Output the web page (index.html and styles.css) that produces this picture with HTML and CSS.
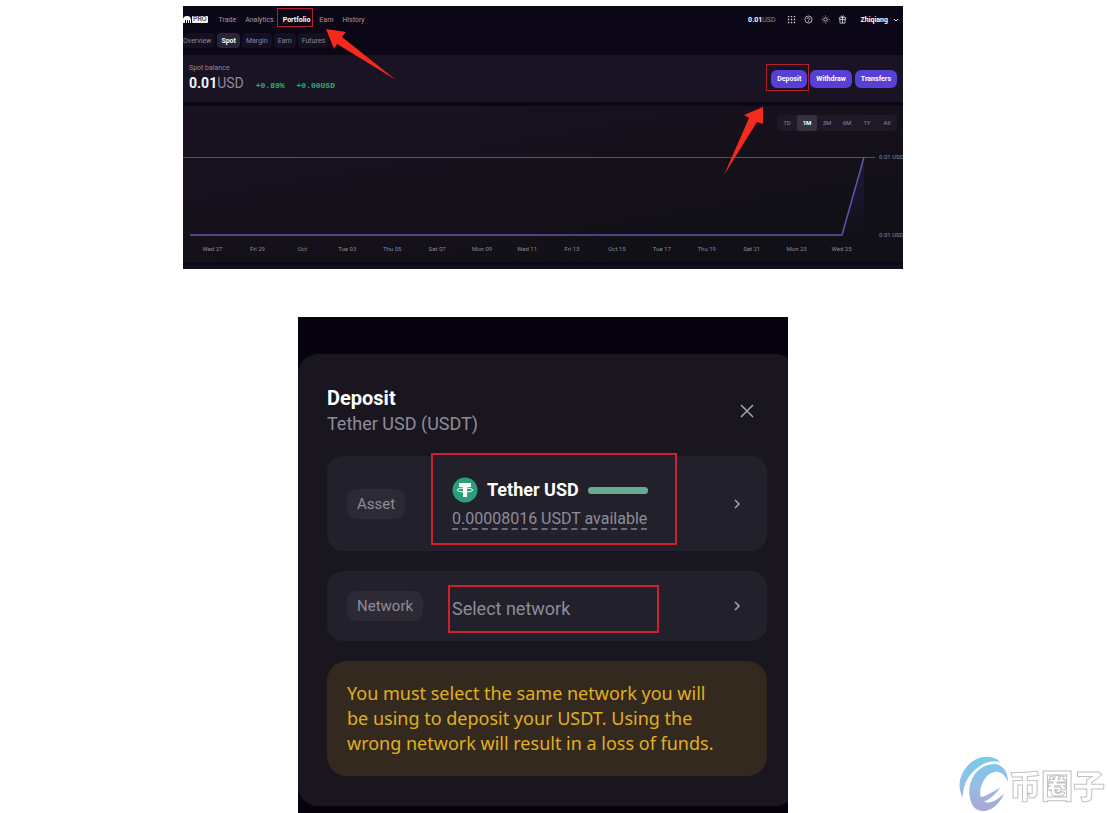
FILE: index.html
```html
<!DOCTYPE html>
<html lang="en">
  <head>
    <meta charset="UTF-8" />
    <meta name="viewport" content="width=device-width, initial-scale=1.0" />
    <title>Deposit</title>
    <link rel="stylesheet" href="styles.css">
  </head>
  <body>
    <main class="article">
      <section class="portfolio">
        <header class="topbar">
          <svg class="logo" viewBox="0 0 9 8" aria-hidden="true">
            <path d="M0 7V4a4 4 0 0 1 8 0v3H7V4.500a.5.5 0 0 0-1 0V7H5V4.500a.5.5 0 0 0-1 0V7H3V4.500a.5.5 0 0 0-1 0V7z" fill="#fff" />
          </svg>
          <span class="pro">PRO</span>
          <nav class="main-nav">
            <a href="#">Trade</a>
            <a href="#">Analytics</a>
            <a href="#" class="active marked">Portfolio</a>
            <a href="#">Earn</a>
            <a href="#">History</a>
          </nav>
          <div class="account">
            <span class="total"><b>0.01</b>USD</span>
            <svg viewBox="0 0 10 10" fill="#d5d2dc" aria-hidden="true">
              <path d="M1 1h1.500v1.500H1zM4.300 1h1.500v1.500H4.300zM7.600 1h1.500v1.500H7.600zM1 4.300h1.500v1.500H1zM4.300 4.300h1.500v1.500H4.300zM7.600 4.300h1.500v1.500H7.600zM1 7.600h1.500v1.500H1zM4.300 7.600h1.500v1.500H4.300zM7.600 7.600h1.500v1.500H7.600z" />
            </svg>
            <svg viewBox="0 0 10 10" fill="none" stroke="#d5d2dc" stroke-width=".9" aria-hidden="true">
              <circle cx="5" cy="5" r="3.900" />
              <path d="M3.800 4.200a1.200 1.200 0 1 1 1.900 1c-.5.300-.7.500-.7 1M5 7v.8" />
            </svg>
            <svg viewBox="0 0 10 10" fill="none" stroke="#d5d2dc" stroke-width=".9" aria-hidden="true">
              <circle cx="5" cy="5" r="1.900" />
              <path d="M5 .6v1M5 8.400v1M.6 5h1M8.400 5h1M1.900 1.900l.7.7M7.400 7.400l.7.700M1.900 8.100l.7-.7M7.400 2.600l.7-.7" />
            </svg>
            <svg viewBox="0 0 10 10" fill="none" stroke="#d5d2dc" stroke-width=".9" aria-hidden="true">
              <path d="M1.500 3h7v2h-7zM2.200 5v4h5.600V5M5 3v6M5 3C3 3 2.800 1 4 1c.8 0 1 1 1 2 0-1 .2-2 1-2 1.200 0 1 2-1 2" />
            </svg>
            <button class="user" type="button">
              Zhiqiang
              <svg viewBox="0 0 6 6" fill="none" stroke="#d5d2dc" aria-hidden="true"><path d="M1 2l2 2 2-2" /></svg>
            </button>
          </div>
        </header>

        <nav class="tabs">
          <a href="#">Overview</a>
          <a href="#" class="active">Spot</a>
          <a href="#">Margin</a>
          <a href="#">Earn</a>
          <a href="#">Futures</a>
        </nav>

        <div class="balance">
          <div>
            <div class="balance-label">Spot balance</div>
            <div class="balance-row">
              <span class="amount"><b>0.01</b>USD</span>
              <span class="change">+0.89%</span>
              <span class="change">+0.00USD</span>
            </div>
          </div>
          <div class="actions">
            <span class="marked"><button type="button">Deposit</button></span>
            <button type="button">Withdraw</button>
            <button type="button">Transfers</button>
          </div>
        </div>

        <div class="chart">
          <div class="ranges">
            <button type="button">7D</button>
            <button type="button" class="active">1M</button>
            <button type="button">3M</button>
            <button type="button">6M</button>
            <button type="button">1Y</button>
            <button type="button">All</button>
          </div>
          <div class="plot">
            <svg viewBox="0 0 692 90" preserveAspectRatio="none" aria-hidden="true">
              <defs>
                <linearGradient id="area" x1="0" y1="0" x2="0" y2="1">
                  <stop offset="0" stop-color="#5741d9" stop-opacity=".2" />
                  <stop offset="1" stop-color="#5741d9" stop-opacity="0" />
                </linearGradient>
              </defs>
              <path d="M659 85L681 7V85z" fill="url(#area)" />
              <path d="M0 7.500H692" stroke="#56525c" />
              <path d="M7 85H659L681 7" fill="none" stroke="#6553ae" stroke-width="1.500" />
            </svg>
            <div class="y-axis">
              <span>0.01 USD</span>
              <span>0.01 USD</span>
            </div>
          </div>
          <div class="x-axis">
            <span>Wed 27</span>
            <span>Fri 29</span>
            <span>Oct</span>
            <span>Tue 03</span>
            <span>Thu 05</span>
            <span>Sat 07</span>
            <span>Mon 09</span>
            <span>Wed 11</span>
            <span>Fri 13</span>
            <span>Oct 15</span>
            <span>Tue 17</span>
            <span>Thu 19</span>
            <span>Sat 21</span>
            <span>Mon 23</span>
            <span>Wed 25</span>
          </div>
        </div>
        <div class="next-panel"></div>

        <svg class="arrow arrow-nav" viewBox="0 0 70 52" aria-hidden="true">
          <path d="M0 0L20 3L16 8L70 51L11 15L8 20z" fill="#f5291c" />
        </svg>
        <svg class="arrow arrow-deposit" viewBox="0 0 40 68" aria-hidden="true">
          <path d="M39 0V17L33 15L0 68L25 11L20 8z" fill="#f5291c" />
        </svg>
      </section>

      <section class="deposit">
        <div class="card">
          <header class="card-header">
            <div>
              <h1>Deposit</h1>
              <p>Tether USD (USDT)</p>
            </div>
            <button class="close" type="button" aria-label="Close">
              <svg viewBox="0 0 14 14" fill="none" stroke="#a9a6b2" stroke-width="1.500"><path d="M1 1l12 12M13 1L1 13" /></svg>
            </button>
          </header>

          <button class="row row-asset" type="button">
            <span class="chip">Asset</span>
            <span class="value">
              <span class="asset-name">
                <svg class="coin" viewBox="0 0 26 26" aria-hidden="true">
                  <circle cx="13" cy="13" r="12.500" fill="#2a9f7c" />
                  <path d="M7 6h12v4h-4v10h-4V10H7z" fill="#fff" />
                  <ellipse cx="13" cy="13" rx="7.800" ry="2" fill="none" stroke="#fff" />
                  <path d="M11.500 12h3v3h-3z" fill="#fff" />
                </svg>
                Tether USD
                <span class="redacted"></span>
              </span>
              <span class="available">0.00008016 USDT available</span>
            </span>
            <svg class="chevron" viewBox="0 0 16 16" fill="none" stroke="#aaa7b3" stroke-width="1.500" aria-hidden="true"><path d="M6 4l4 4-4 4" /></svg>
            <span class="highlight"></span>
          </button>

          <button class="row row-network" type="button">
            <span class="chip">Network</span>
            <span class="value placeholder">Select network</span>
            <svg class="chevron" viewBox="0 0 16 16" fill="none" stroke="#aaa7b3" stroke-width="1.500" aria-hidden="true"><path d="M6 4l4 4-4 4" /></svg>
            <span class="highlight"></span>
          </button>

          <p class="warning">You must select the same network you will be using to deposit your USDT. Using the wrong network will result in a loss of funds.</p>
        </div>
      </section>
    </main>

    <div class="watermark">
      <svg viewBox="0 0 52 58" aria-hidden="true">
        <defs>
          <linearGradient id="brand" gradientUnits="userSpaceOnUse" x1="0" y1="0" x2="0" y2="58">
            <stop offset="0" stop-color="#76cbee" />
            <stop offset=".5" stop-color="#93bfe5" />
            <stop offset="1" stop-color="#aca6d2" />
          </linearGradient>
        </defs>
        <path d="M43 6C34-2 19-1 9 10C0 20-2 33 4 43C4 32 8 22 17 14C25 7 33 4 43 6z" fill="url(#brand)" />
        <path d="M51 27C51 13 42 6 31 9C18 12 9 26 11 41C12 52 18 58 27 57C36 56 43 48 47 39C40 46 31 51 26 47C19 42 22 28 30 20C38 13 47 16 51 27z" fill="url(#brand)" />
        <path d="M8 44C6 33 11 21 21 13" fill="none" stroke="#fff" />
        <path d="M20 43C28 43 34 37 43 33C37 41 29 48 22 48z" fill="url(#brand)" />
      </svg>
      <span lang="zh-CN">币圈子</span>
    </div>
  </body>
</html>
```
FILE: styles.css
```css
* {
  box-sizing: border-box;
}
body {
  margin: 0;
  background: #fff;
  font-family: Roboto, "Noto Sans", "Noto Sans CJK SC", sans-serif;
}
h1,
p {
  margin: 0;
}
a {
  color: inherit;
  text-decoration: none;
}
button {
  font: inherit;
  color: inherit;
  border: none;
  padding: 0;
  background: none;
  cursor: pointer;
}
svg {
  display: block;
}
.article {
  display: flex;
  flex-direction: column;
  align-items: center;
  gap: 48px;
  padding: 6px 23px 0 0;
  overflow: hidden;
}

/* Portfolio page */
.portfolio {
  position: relative;
  width: 100%;
  max-width: 720px;
  overflow: hidden;
  background: #0c0717;
  color: #8d8898;
  font-size: 7px;
  line-height: 8px;
}
.topbar {
  display: flex;
  align-items: center;
  height: 27px;
  padding-right: 4px;
}
.logo {
  width: 9px;
  height: 8px;
}
.pro {
  padding: 0 1px;
  border-radius: 1px;
  background: #f4f2f7;
  color: #120c1d;
  line-height: 7px;
}
.main-nav {
  display: flex;
  gap: 9px;
  margin-left: 11px;
  color: #a09ba9;
}
.main-nav .active {
  color: #fff;
  font-weight: bold;
}
.marked {
  position: relative;
}
.marked::after {
  content: "";
  position: absolute;
  inset: -8px -3px -3px -6px;
  border: 1px solid #b3202d;
  pointer-events: none;
}
.account {
  display: flex;
  align-items: center;
  gap: 8px;
  margin-left: auto;
}
.account > svg {
  width: 9px;
  height: 9px;
}
.total {
  margin-right: 3px;
}
.total b {
  color: #fff;
}
.user {
  display: flex;
  align-items: center;
  gap: 5px;
  margin-left: 6px;
  color: #fff;
  font-weight: bold;
}
.user svg {
  width: 6px;
  height: 6px;
}
.tabs {
  display: flex;
  gap: 2px;
  height: 22px;
}
.tabs a {
  height: 15px;
  padding: 0 4px;
  border-radius: 4px;
  background: #150f20;
  line-height: 16px;
}
.tabs a:first-child {
  padding-left: 0;
}
.tabs .active {
  background: #2a2435;
  color: #fff;
  font-weight: bold;
}
.balance {
  display: flex;
  align-items: center;
  justify-content: space-between;
  height: 47px;
  padding: 0 6px;
  background: #1a1323;
}
.balance-label {
  line-height: 9px;
}
.balance-row {
  display: flex;
  align-items: baseline;
  gap: 12px;
}
.amount {
  font-size: 14px;
  line-height: 20px;
}
.amount b {
  color: #f5f3f8;
}
.change {
  color: #22b573;
  font-family: "Liberation Mono", monospace;
  font-size: 8px;
  font-weight: bold;
}
.actions {
  display: flex;
  gap: 3px;
}
.actions button {
  height: 18px;
  padding: 0 6px;
  border-radius: 6px;
  background: #5640d6;
  color: #fff;
  font-weight: bold;
}
.actions .marked::after {
  inset: -6px -2px -3px -5px;
}
.chart {
  margin-top: 4px;
  padding: 9px 0;
  background: linear-gradient(170deg, #1a1221, #121017 80%);
}
.ranges {
  display: flex;
  width: max-content;
  margin: 0 6px 0 auto;
  border-radius: 4px;
  background: #1e1828;
  font-size: 6px;
}
.ranges button {
  width: 20px;
  height: 16px;
  border-radius: 3px;
}
.ranges .active {
  background: #373141;
  color: #fff;
  font-weight: bold;
}
.plot {
  display: flex;
  height: 90px;
  margin-top: 19px;
}
.plot svg {
  flex: 1;
  min-width: 0;
  height: 90px;
}
.y-axis {
  display: flex;
  flex-direction: column;
  justify-content: space-between;
  width: 28px;
  padding: 3px 0 1px 4px;
  white-space: nowrap;
}
.x-axis {
  display: grid;
  grid-template-columns: repeat(15, 1fr);
  margin-top: 5px;
  padding: 0 39px 0 7px;
  text-align: center;
}
.x-axis,
.y-axis {
  font-size: 6px;
}
.next-panel {
  height: 4px;
  margin-top: 3px;
  background: #110e16;
}
.arrow {
  position: absolute;
}
.arrow-nav {
  top: 23px;
  left: 143px;
  width: 70px;
  height: 52px;
}
.arrow-deposit {
  top: 101px;
  right: 139px;
  width: 40px;
  height: 68px;
}

/* Deposit dialog */
.deposit {
  width: 100%;
  max-width: 490px;
  padding: 37px 0 7px;
  overflow: hidden;
  background: #06030e;
}
.card {
  display: flex;
  flex-direction: column;
  gap: 20px;
  margin-right: -8px;
  padding: 32px 29px 30px;
  border-radius: 20px;
  background: #19161f;
}
.card-header {
  display: flex;
  align-items: center;
  justify-content: space-between;
  padding-right: 13px;
  color: #8f8c98;
  font-size: 18px;
  line-height: 25px;
}
.card-header h1 {
  color: #fff;
  font-size: 20px;
  line-height: 25px;
}
.close svg {
  width: 14px;
  height: 14px;
}
.row {
  position: relative;
  display: grid;
  grid-template-columns: 105px 1fr 16px;
  align-items: center;
  padding: 0 22px 0 20px;
  border-radius: 16px;
  background: #22202b;
  color: #8f8c98;
  text-align: left;
}
.row-asset {
  height: 95px;
}
.row-network {
  height: 70px;
}
.chip {
  justify-self: start;
  padding: 0 10px;
  border-radius: 9px;
  background: #2d2a36;
  font-size: 15px;
  line-height: 30px;
}
.asset-name {
  display: flex;
  align-items: center;
  gap: 9px;
  margin-bottom: 6px;
  color: #fff;
  font-size: 18px;
  font-weight: bold;
  line-height: 26px;
}
.coin {
  width: 26px;
  height: 26px;
}
.redacted {
  width: 60px;
  height: 7px;
  border-radius: 4px;
  background: #6aaa92;
}
.available {
  display: inline-block;
  border-bottom: 2px dashed #6d6977;
  font-size: 16px;
  line-height: 19px;
}
.placeholder {
  padding-top: 4px;
  font-size: 18px;
}
.chevron {
  width: 16px;
  height: 16px;
}
.highlight {
  position: absolute;
  border: 2px solid #cf202f;
  pointer-events: none;
}
.row-asset .highlight {
  top: -3px;
  left: 104px;
  width: 246px;
  height: 92px;
}
.row-network .highlight {
  top: 14px;
  left: 121px;
  width: 211px;
  height: 48px;
}
.warning {
  padding: 20px 50px 20px 20px;
  border-radius: 20px;
  background: #33291f;
  color: #e0b01f;
  font-family: "Noto Sans", sans-serif;
  font-size: 18px;
  line-height: 25px;
}

/* Site mark in the corner */
.watermark {
  position: fixed;
  right: 4px;
  bottom: 0;
  display: flex;
  align-items: center;
  color: #fff;
  font-family: "Noto Sans CJK SC", sans-serif;
  font-size: 32px;
  font-weight: 900;
  line-height: 56px;
  -webkit-text-stroke: 1px #c2c2c2;
}
.watermark svg {
  width: 50px;
  height: 58px;
}
```
